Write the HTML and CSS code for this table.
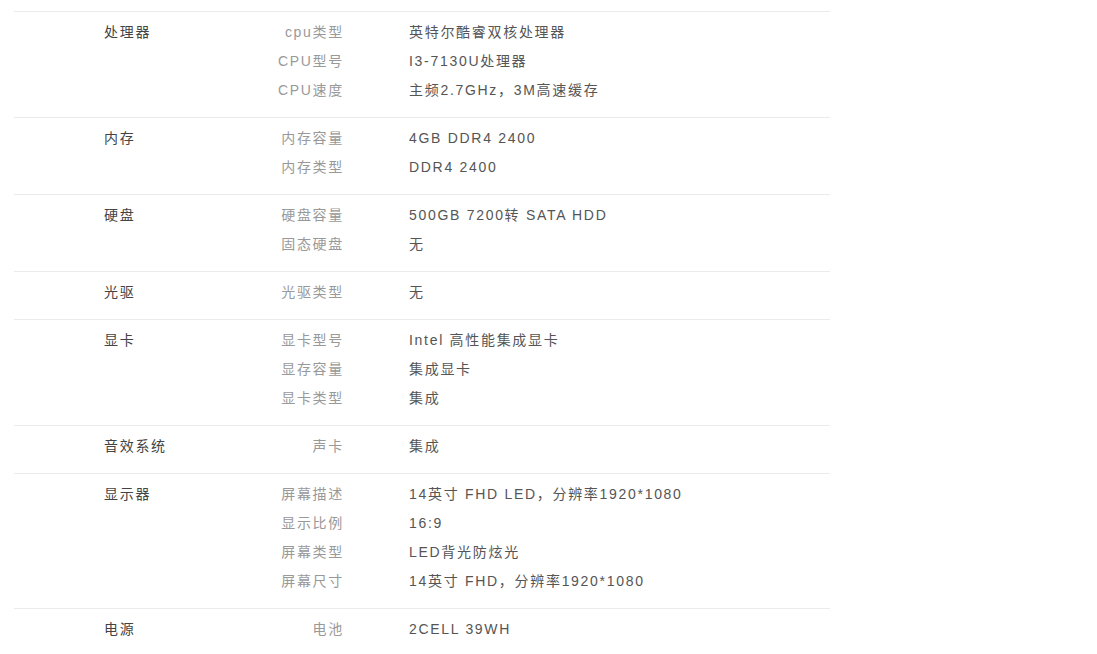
FILE: index.html
```html
<!DOCTYPE html>
<html lang="zh-CN">
<head>
<meta charset="utf-8">
<title>规格参数</title>
<link rel="stylesheet" href="styles.css">
</head>
<body>
<div class="specs">
  <div class="group">
    <div class="cat">处理器</div>
    <div class="rows">
      <div class="row"><span class="label">cpu类型</span><span class="value">英特尔酷睿双核处理器</span></div>
      <div class="row"><span class="label">CPU型号</span><span class="value">I3-7130U处理器</span></div>
      <div class="row"><span class="label">CPU速度</span><span class="value">主频2.7GHz，3M高速缓存</span></div>
    </div>
  </div>
  <div class="group">
    <div class="cat">内存</div>
    <div class="rows">
      <div class="row"><span class="label">内存容量</span><span class="value">4GB DDR4 2400</span></div>
      <div class="row"><span class="label">内存类型</span><span class="value">DDR4 2400</span></div>
    </div>
  </div>
  <div class="group">
    <div class="cat">硬盘</div>
    <div class="rows">
      <div class="row"><span class="label">硬盘容量</span><span class="value">500GB 7200转 SATA HDD</span></div>
      <div class="row"><span class="label">固态硬盘</span><span class="value">无</span></div>
    </div>
  </div>
  <div class="group">
    <div class="cat">光驱</div>
    <div class="rows">
      <div class="row"><span class="label">光驱类型</span><span class="value">无</span></div>
    </div>
  </div>
  <div class="group">
    <div class="cat">显卡</div>
    <div class="rows">
      <div class="row"><span class="label">显卡型号</span><span class="value">Intel 高性能集成显卡</span></div>
      <div class="row"><span class="label">显存容量</span><span class="value">集成显卡</span></div>
      <div class="row"><span class="label">显卡类型</span><span class="value">集成</span></div>
    </div>
  </div>
  <div class="group">
    <div class="cat">音效系统</div>
    <div class="rows">
      <div class="row"><span class="label">声卡</span><span class="value">集成</span></div>
    </div>
  </div>
  <div class="group">
    <div class="cat">显示器</div>
    <div class="rows">
      <div class="row"><span class="label">屏幕描述</span><span class="value">14英寸 FHD LED，分辨率1920*1080</span></div>
      <div class="row"><span class="label">显示比例</span><span class="value">16:9</span></div>
      <div class="row"><span class="label">屏幕类型</span><span class="value">LED背光防炫光</span></div>
      <div class="row"><span class="label">屏幕尺寸</span><span class="value">14英寸 FHD，分辨率1920*1080</span></div>
    </div>
  </div>
  <div class="group">
    <div class="cat">电源</div>
    <div class="rows">
      <div class="row"><span class="label">电池</span><span class="value">2CELL 39WH</span></div>
    </div>
  </div>
</div>
</body>
</html>
```
FILE: styles.css
```css
html, body {
  margin: 0;
  padding: 0;
  background: #fff;
}
body {
  font-family: "Liberation Sans", "Noto Sans CJK SC", sans-serif;
  font-size: 14px;
  letter-spacing: 1.7px;
  color: #555;
}
.specs {
  margin: 11px 0 0 14px;
  width: 816px;
}
.group {
  display: flex;
  border-top: 1px solid #ebebeb;
  padding: 6px 0 12px 90px;
  line-height: 29px;
}
.cat {
  width: 148px;
  color: #444;
  flex: none;
}
.rows {
  flex: 1;
}
.row {
  display: flex;
}
.label {
  width: 92px;
  text-align: right;
  color: #999;
  flex: none;
  margin-right: 65px;
}
.value {
  color: #555;
}
```
